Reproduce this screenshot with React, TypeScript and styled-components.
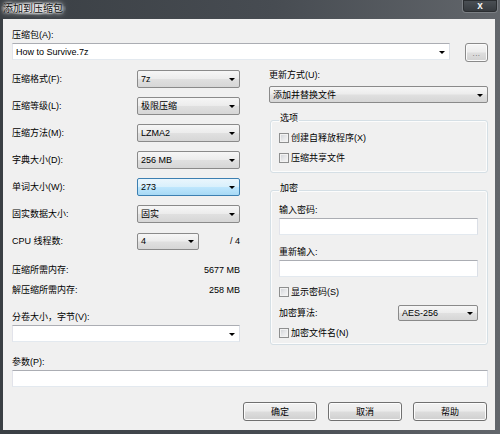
import { FC } from "react";
import styled, { createGlobalStyle, css } from "styled-components";

const GlobalStyle = createGlobalStyle`
  body {
    margin: 0;
    background: #2f3337;
    font-family: "Liberation Sans", "Noto Sans CJK SC", sans-serif;
  }
`;

const Window = styled.div`
  width: 500px;
  height: 434px;
  display: flex;
  flex-direction: column;
  background: linear-gradient(to right, #3a3f44 0%, #474c52 55%, #62666b 100%);
  overflow: hidden;
`;

const TitleBar = styled.div`
  height: 19px;
  display: flex;
  justify-content: space-between;
  align-items: flex-start;
  flex-shrink: 0;
`;

const Title = styled.div`
  margin: 2px 0 0 1px;
  padding: 1px 3px 0 2px;
  font-size: 10px;
  line-height: 12px;
  color: #111;
  background: radial-gradient(ellipse at center, rgba(235, 235, 235, 0.75) 40%, rgba(235, 235, 235, 0) 75%);
  text-shadow: 0 0 2px #fff, 0 0 4px rgba(255, 255, 255, 0.9), 0 0 7px rgba(255, 255, 255, 0.7);
`;

const CloseButton = styled.div`
  width: 36px;
  height: 13px;
  margin-right: 2px;
  box-sizing: border-box;
  display: flex;
  align-items: center;
  justify-content: center;
  border: 1px solid #7b7f84;
  border-top: none;
  border-radius: 0 0 4px 4px;
  background: linear-gradient(#4c5156, #34383c);
  box-shadow: inset 0 0 0 1px #2a2d30;
  color: #f4f4f4;
  font-size: 10px;
  font-weight: bold;
  line-height: 12px;
`;

const Client = styled.div`
  flex: 1;
  margin: 0 5px 4px 3px;
  background: #f0f0f0;
  padding: 10px 7px 0 9px;
  display: flex;
  flex-direction: column;
  font-size: 9px;
  line-height: 12px;
  color: #000;
`;

const Label = styled.div<{ $top?: number }>`
  height: 12px;
  white-space: nowrap;
  margin-top: ${({ $top }) => $top ?? 0}px;
`;

const ArchiveRow = styled.div`
  margin-top: 2px;
  display: flex;
  align-items: flex-start;
  justify-content: space-between;
`;

type ComboKind = "list" | "edit" | "hot";

const comboLook = {
  list: css`
    border: 1px solid #8a8a8a;
    border-radius: 2px;
    background: linear-gradient(#f6f6f6 0%, #ececec 48%, #e0e0e0 52%, #d6d6d6 100%);
  `,
  edit: css`
    border: 1px solid;
    border-color: #abadb3 #dbdfe6 #e3e9ef #e2e3ea;
    background: #fff;
  `,
  hot: css`
    border: 1px solid #3c7fb1;
    border-radius: 2px;
    background: linear-gradient(#eaf6fd 0%, #d9f0fc 48%, #bee6fd 52%, #a7d9f5 100%);
  `,
};

const ComboBox = styled.div<{ $kind: ComboKind; $width?: number; $height?: number }>`
  box-sizing: border-box;
  width: ${({ $width }) => ($width ? `${$width}px` : "auto")};
  flex: ${({ $width }) => ($width ? "none" : "1")};
  height: ${({ $height }) => $height ?? 18}px;
  display: flex;
  align-items: center;
  justify-content: space-between;
  padding: 0 4px 0 3px;
  ${({ $kind }) => comboLook[$kind]}
`;

const ComboText = styled.span`
  white-space: nowrap;
`;

const Arrow = styled.span`
  width: 0;
  height: 0;
  border-left: 3px solid transparent;
  border-right: 3px solid transparent;
  border-top: 3px solid #000;
  margin-top: 1px;
`;

const BrowseButton = styled.div`
  box-sizing: border-box;
  width: 23px;
  height: 19px;
  margin-left: 15px;
  border: 1px solid #8a8a8a;
  border-radius: 3px;
  background: linear-gradient(#f6f6f6 0%, #ececec 48%, #dedede 52%, #d2d2d2 100%);
  box-shadow: inset 0 0 0 1px #fbfbfb;
  display: flex;
  align-items: center;
  justify-content: center;
  color: #666;
  font-size: 8px;
  letter-spacing: 0.5px;
  padding-top: 2px;
`;

const Columns = styled.div`
  margin-top: 6px;
  display: grid;
  grid-template-columns: 228px 219px;
  column-gap: 29px;
  align-items: start;
`;

const Column = styled.div`
  display: flex;
  flex-direction: column;
`;

const LeftColumn = styled(Column)`
  padding-top: 2px;
`;

const FieldRow = styled.div<{ $top?: number }>`
  height: 18px;
  margin-top: ${({ $top }) => $top ?? 9}px;
  display: flex;
  align-items: center;
`;

const FieldLabel = styled.span`
  width: 125px;
  flex: none;
  white-space: nowrap;
`;

const Aside = styled.span`
  margin-left: auto;
  white-space: nowrap;
`;

const InfoRow = styled.div<{ $top: number }>`
  height: 12px;
  margin-top: ${({ $top }) => $top}px;
  display: flex;
  justify-content: space-between;
  white-space: nowrap;
`;

const Group = styled.fieldset<{ $top: number; $bottom: number; $pad: number }>`
  margin: ${({ $top }) => $top}px 0 0 1px;
  padding: ${({ $pad }) => $pad}px 9px ${({ $bottom }) => $bottom}px 8px;
  border: 1px solid #d5dfe5;
  border-radius: 3px;
  box-shadow: inset 0 0 0 1px #fcfcfc;
  min-width: 0;
  display: flex;
  flex-direction: column;
`;

const Legend = styled.legend`
  padding: 0 1px 4px 1px;
  margin-left: 0;
  font-size: 9px;
  line-height: 12px;
`;

const CheckRow = styled.div<{ $top?: number }>`
  height: 12px;
  margin-top: ${({ $top }) => $top ?? 0}px;
  display: flex;
  align-items: center;
  gap: 2px;
  white-space: nowrap;
`;

const CheckBox = styled.span`
  box-sizing: border-box;
  width: 10px;
  height: 10px;
  flex: none;
  border: 1px solid #8e8f8f;
  background: linear-gradient(135deg, #cdd0d4 0%, #e6e7e9 50%, #f7f7f7 100%);
  box-shadow: inset 0 0 0 1px #f2f2f2;
`;

const TextBox = styled.div<{ $top?: number }>`
  box-sizing: border-box;
  height: 17px;
  margin-top: ${({ $top }) => $top ?? 2}px;
  border: 1px solid;
  border-color: #abadb3 #dbdfe6 #e3e9ef #e2e3ea;
  background: #fff;
`;

const SplitRow = styled.div<{ $top: number }>`
  height: 16px;
  margin-top: ${({ $top }) => $top}px;
  display: flex;
  align-items: center;
  justify-content: space-between;
  white-space: nowrap;
`;

const ButtonBar = styled.div`
  margin-top: 15px;
  display: flex;
  justify-content: flex-end;
  gap: 11px;
  padding-right: 1px;
`;

const PushButton = styled.div`
  box-sizing: border-box;
  width: 74px;
  height: 19px;
  border: 1px solid #707070;
  border-radius: 3px;
  background: linear-gradient(#f2f2f2 0%, #ebebeb 48%, #dddddd 52%, #cfcfcf 100%);
  box-shadow: inset 0 0 0 1px #fcfcfc;
  display: flex;
  align-items: center;
  justify-content: center;
  white-space: nowrap;
`;

const Combo: FC<{ kind?: ComboKind; value?: string; width?: number; height?: number }> = ({
  kind = "list",
  value = "",
  width,
  height,
}) => (
  <ComboBox $kind={kind} $width={width} $height={height}>
    <ComboText>{value}</ComboText>
    <Arrow />
  </ComboBox>
);

const settings = [
  { label: "压缩格式(F):", value: "7z" },
  { label: "压缩等级(L):", value: "极限压缩" },
  { label: "压缩方法(M):", value: "LZMA2" },
  { label: "字典大小(D):", value: "256 MB" },
  { label: "单词大小(W):", value: "273", hot: true },
  { label: "固实数据大小:", value: "固实" },
];

const App: FC = () => (
  <>
    <GlobalStyle />
    <Window>
      <TitleBar>
        <Title>添加到压缩包</Title>
        <CloseButton>x</CloseButton>
      </TitleBar>
      <Client>
        <Label>压缩包(A):</Label>
        <ArchiveRow>
          <Combo kind="edit" value="How to Survive.7z" height={17} />
          <BrowseButton>...</BrowseButton>
        </ArchiveRow>

        <Columns>
          <LeftColumn>
            {settings.map((s, i) => (
              <FieldRow key={s.label} $top={i === 0 ? 0 : 9}>
                <FieldLabel>{s.label}</FieldLabel>
                <Combo kind={s.hot ? "hot" : "list"} value={s.value} width={103} />
              </FieldRow>
            ))}
            <FieldRow>
              <FieldLabel>CPU 线程数:</FieldLabel>
              <Combo value="4" width={62} height={17} />
              <Aside>/ 4</Aside>
            </FieldRow>
            <InfoRow $top={14}>
              <span>压缩所需内存:</span>
              <span>5677 MB</span>
            </InfoRow>
            <InfoRow $top={8}>
              <span>解压缩所需内存:</span>
              <span>258 MB</span>
            </InfoRow>
            <Label $top={15}>分卷大小，字节(V):</Label>
            <ArchiveRow>
              <Combo kind="edit" height={17} />
            </ArchiveRow>
          </LeftColumn>

          <Column>
            <Label $top={1}>更新方式(U):</Label>
            <Label $top={5} as="div">
              <Combo value="添加并替换文件" height={17} />
            </Label>
            <Group $top={14} $pad={4} $bottom={8}>
              <Legend>选项</Legend>
              <CheckRow>
                <CheckBox />
                创建自释放程序(X)
              </CheckRow>
              <CheckRow $top={8}>
                <CheckBox />
                压缩共享文件
              </CheckRow>
            </Group>
            <Group $top={9} $pad={6} $bottom={5}>
              <Legend>加密</Legend>
              <Label>输入密码:</Label>
              <TextBox />
              <Label $top={11}>重新输入:</Label>
              <TextBox />
              <CheckRow $top={9}>
                <CheckBox />
                显示密码(S)
              </CheckRow>
              <SplitRow $top={7}>
                <span>加密算法:</span>
                <Combo value="AES-256" width={80} height={16} />
              </SplitRow>
              <CheckRow $top={6}>
                <CheckBox />
                加密文件名(N)
              </CheckRow>
            </Group>
          </Column>
        </Columns>

        <Label $top={11}>参数(P):</Label>
        <TextBox />

        <ButtonBar>
          <PushButton>确定</PushButton>
          <PushButton>取消</PushButton>
          <PushButton>帮助</PushButton>
        </ButtonBar>
      </Client>
    </Window>
  </>
);

export default App;
